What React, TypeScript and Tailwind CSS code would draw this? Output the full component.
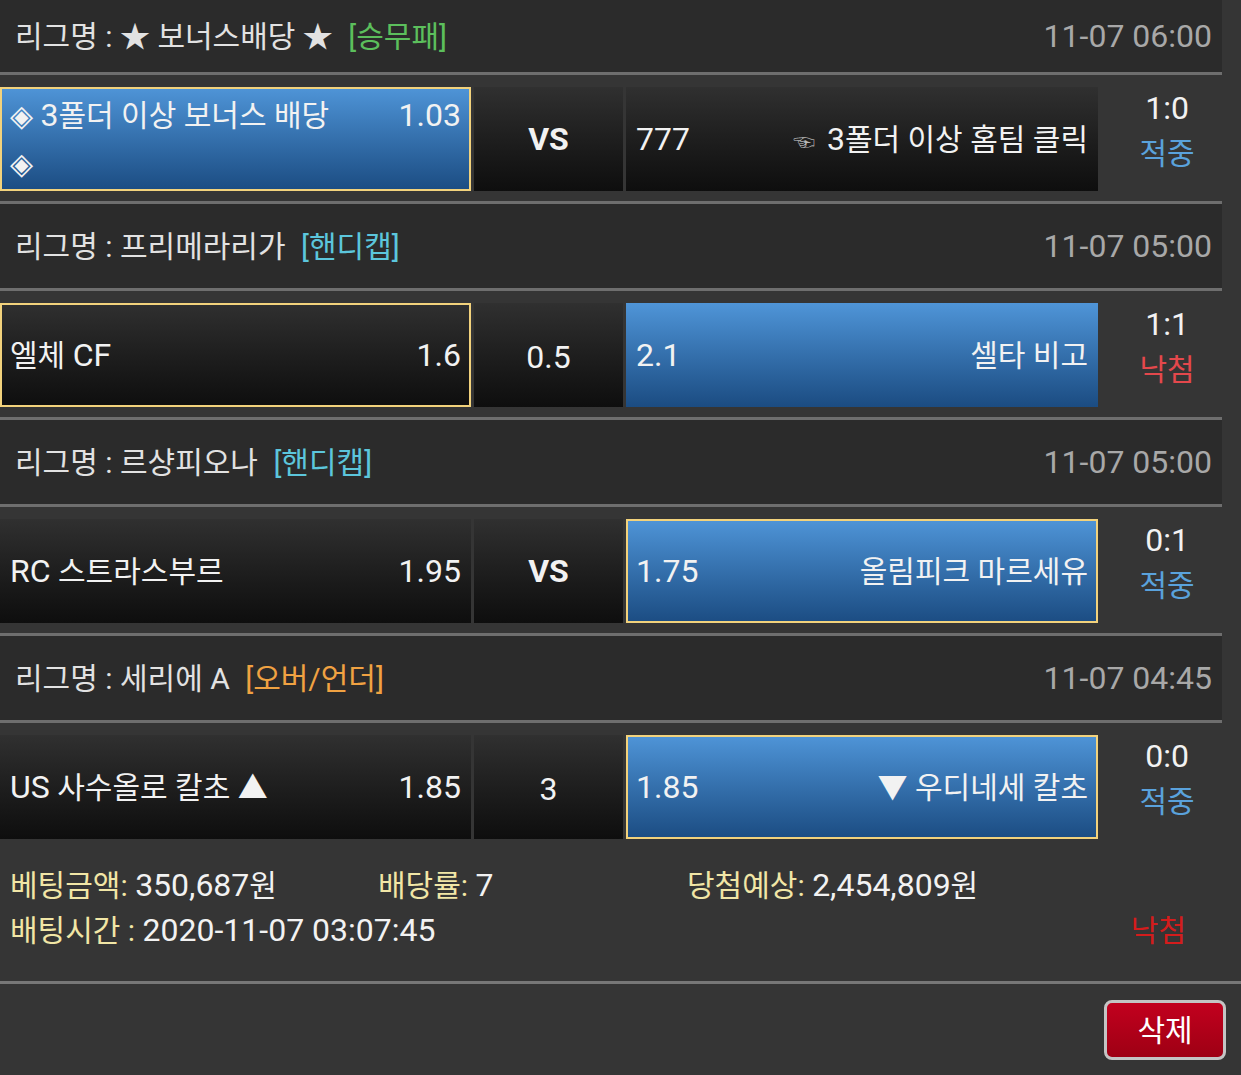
import React from 'react'

type Match = {
    league: string
    tag: string
    tagColor: string
    date: string
    home: React.ReactNode
    homeOdds: string
    mid: string
    midBold?: boolean
    awayOdds: string
    away: React.ReactNode
    win: 'home' | 'away'
    pick: 'home' | 'away'
    score: string
    result: '적중' | '낙첨'
}

// latin text in the shot is a bit bigger than the hangul
const L = ({children}: { children: React.ReactNode }) => <span className="text-[32px]">{children}</span>

const matches: Match[] = [
    {
        league: '★ 보너스배당 ★', tag: '[승무패]', tagColor: 'text-[#5cbf5c]', date: '11-07 06:00',
        home: <>◈ <L>3</L>폴더 이상 보너스 배당 ◈</>, homeOdds: '1.03', mid: 'VS', midBold: true,
        awayOdds: '777',
        away: <><span className="mr-[12px] align-middle text-[22px] text-[#b8b8b8]">☜</span><L>3</L>폴더 이상 홈팀 클릭</>,
        win: 'home', pick: 'home', score: '1:0', result: '적중',
    },
    {
        league: '프리메라리가', tag: '[핸디캡]', tagColor: 'text-[#5cc6dc]', date: '11-07 05:00',
        home: <>엘체 <L>CF</L></>, homeOdds: '1.6', mid: '0.5', awayOdds: '2.1', away: '셀타 비고',
        win: 'away', pick: 'home', score: '1:1', result: '낙첨',
    },
    {
        league: '르샹피오나', tag: '[핸디캡]', tagColor: 'text-[#5cc6dc]', date: '11-07 05:00',
        home: <><L>RC</L> 스트라스부르</>, homeOdds: '1.95', mid: 'VS', midBold: true, awayOdds: '1.75', away: '올림피크 마르세유',
        win: 'away', pick: 'away', score: '0:1', result: '적중',
    },
    {
        league: '세리에 A', tag: '[오버/언더]', tagColor: 'text-[#f0a242]', date: '11-07 04:45',
        home: <><L>US</L> 사수올로 칼초 ▲</>, homeOdds: '1.85', mid: '3', awayOdds: '1.85', away: '▼ 우디네세 칼초',
        win: 'away', pick: 'away', score: '0:0', result: '적중',
    },
]

const cellClass = (win: boolean, pick: boolean) =>
    [
        'border-2 bg-origin-border',
        win ? 'bg-gradient-to-b from-[#4f95d8] to-[#1b4c82]' : 'bg-gradient-to-b from-[#303030] to-[#0e0e0e]',
        pick ? 'border-[#f2d27c]' : 'border-transparent',
    ].join(' ')

const Line = () => <div className="h-[3px] bg-[#6e6e6e]"/>

const MatchRow = ({m}: { m: Match }) => {
    return (
        <div className="flex h-[126px] pt-[12px] pb-[10px]">
            <div className={`flex w-[471px] items-center px-[8px] ${cellClass(m.win === 'home', m.pick === 'home')}`}>
                <div className="flex w-full items-start justify-between leading-[48px]">
                    <div className="max-w-[335px]">{m.home}</div>
                    <L>{m.homeOdds}</L>
                </div>
            </div>
            <div className={`ml-[3px] flex w-[149px] items-center justify-center ${m.midBold ? 'font-bold' : ''} ${cellClass(false, false)}`}>
                <span className={`text-[32px] ${m.midBold ? '' : 'mt-[4px]'}`}>{m.mid}</span>
            </div>
            <div className={`ml-[3px] flex w-[472px] items-center justify-between px-[8px] ${cellClass(m.win === 'away', m.pick === 'away')}`}>
                <L>{m.awayOdds}</L>
                <span>{m.away}</span>
            </div>
            <div className="-mt-[2px] flex flex-1 flex-col items-center pl-[14px] leading-[46px]">
                <L>{m.score}</L>
                <span className={m.result === '적중' ? 'text-[#5aa2dc]' : 'text-[#e4484c]'}>{m.result}</span>
            </div>
        </div>
    )
}

const App = () => {
    return (
        <div className="min-h-screen w-[1241px] bg-[#353535] font-['Roboto','Noto_Sans_CJK_KR',sans-serif] text-[30px] text-[#f2f2f2]">
            <div className="w-[1222px]">
                {matches.map((m, i) => (
                    <div key={i}>
                        <div className={`flex items-center justify-between bg-[#2b2b2b] pl-[15px] pr-[10px] ${i === 0 ? 'h-[72px]' : 'h-[84px]'}`}>
                            <div className="text-[#e2e2e2]">
                                리그명 : {m.league} <span className={`ml-[8px] ${m.tagColor}`}>{m.tag}</span>
                            </div>
                            <div className="text-[32px] text-[#a8a8a8]">{m.date}</div>
                        </div>
                        <Line/>
                        <MatchRow m={m}/>
                        {i < matches.length - 1 && <Line/>}
                    </div>
                ))}
            </div>

            <div className="pl-[10px] pr-[55px] pt-[14px] pb-[28px] leading-[45px]">
                <div className="flex">
                    <div className="w-[368px]"><span className="text-[#f1e6a6]">베팅금액:</span> <L>350,687</L>원</div>
                    <div className="w-[309px]"><span className="text-[#f1e6a6]">배당률:</span> <L>7</L></div>
                    <div><span className="text-[#f1e6a6]">당첨예상:</span> <L>2,454,809</L>원</div>
                </div>
                <div className="flex justify-between">
                    <div><span className="text-[#f1e6a6]">배팅시간 :</span> <L>2020-11-07 03:07:45</L></div>
                    <div className="text-[#d41c1c]">낙첨</div>
                </div>
            </div>
            <div className="h-[3px] bg-[#777777]"/>
            <div className="flex justify-end pt-[16px] pr-[15px] pb-[15px]">
                <button className="h-[60px] w-[122px] rounded-[8px] border-[3px] border-[#c4c4c4] bg-gradient-to-b from-[#c2001e] to-[#9e0014] text-[30px] text-white">
                    삭제
                </button>
            </div>
        </div>
    )
}

export default App
